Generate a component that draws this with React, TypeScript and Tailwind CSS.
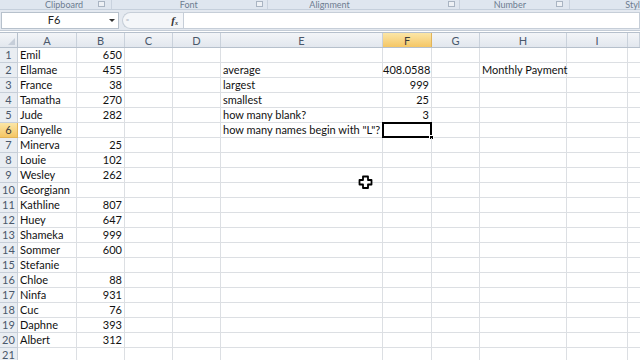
/* Excel 2010 sheet — names & values with summary formulas */

const COLS = ["A", "B", "C", "D", "E", "F", "G", "H", "I", ""];

const NAMES: [string, number | null][] = [
  ["Emil", 650],
  ["Ellamae", 455],
  ["France", 38],
  ["Tamatha", 270],
  ["Jude", 282],
  ["Danyelle", null],
  ["Minerva", 25],
  ["Louie", 102],
  ["Wesley", 262],
  ["Georgiann", null],
  ["Kathline", 807],
  ["Huey", 647],
  ["Shameka", 999],
  ["Sommer", 600],
  ["Stefanie", null],
  ["Chloe", 88],
  ["Ninfa", 931],
  ["Cuc", 76],
  ["Daphne", 393],
  ["Albert", 312],
  ["", null],
];

const SUMMARY: Record<number, [string, string]> = {
  2: ["average", "408.0588"],
  3: ["largest", "999"],
  4: ["smallest", "25"],
  5: ["how many blank?", "3"],
  6: ['how many names begin with "L"?', ""],
};

const GRID = "grid grid-cols-[18px_59px_48px_48px_48px_162px_49px_48px_87px_61px_1fr]";
const FONT = { fontFamily: 'Lato, "Liberation Sans", Arial, sans-serif' };

function Launcher() {
  return (
    <span className="inline-block mt-[1px] w-[7px] h-[6px] border border-[#a9b4c2] bg-[#eef1f5]" />
  );
}

function Cursor() {
  return (
    <svg width="16" height="16" viewBox="0 0 16 16" className="absolute left-[358px] top-[175px]">
      <path d="M6.5 3.5h4v3h3v4h-3v3h-4v-3h-3v-4h3z" fill="#888" opacity="0.35" />
      <path
        d="M5 1.5h5v3.5h3.5v4.5h-3.5v3.5h-5v-3.5h-3.5v-4.5h3.5z"
        fill="#fff"
        stroke="#000"
        strokeWidth="1.8"
        strokeLinejoin="round"
      />
    </svg>
  );
}

export default function App() {
  return (
    <div className="relative w-[640px] h-[360px] overflow-hidden bg-white text-[11px]" style={FONT}>
      {/* Ribbon group labels */}
      <div className="flex h-[10px] bg-[#dfe6ef] text-[#6d7c90] text-[9px] leading-[9px] border-b border-[#c5cfdb]">
        <div className="w-[112px] flex items-start justify-between pl-[45px] pr-[6px] border-r border-[#c9d2de]">
          <span>Clipboard</span>
          <Launcher />
        </div>
        <div className="w-[157px] flex items-start justify-between pl-[68px] pr-[4px] border-r border-[#c9d2de]">
          <span>Font</span>
          <Launcher />
        </div>
        <div className="w-[192px] flex items-start justify-between pl-[41px] pr-[4px] border-r border-[#c9d2de]">
          <span>Alignment</span>
          <Launcher />
        </div>
        <div className="w-[111px] flex items-start justify-between pl-[34px] pr-[6px] border-r border-[#c9d2de]">
          <span>Number</span>
          <Launcher />
        </div>
        <div className="flex-1 pl-[55px] whitespace-nowrap">
          <span>Styl</span>
        </div>
      </div>

      {/* Formula bar */}
      <div className="flex items-center h-[21px] bg-[#e4e9f0] border-b border-[#c4ccd6]">
        <div className="relative w-[118px] h-[17px] ml-[1px] bg-white border border-[#b7c1cc] flex items-center">
          <span className="flex-1 text-center pr-[12px] text-[#222]">F6</span>
          <span className="absolute right-[3px] top-[6px] w-0 h-0 border-l-[3px] border-r-[3px] border-t-[3px] border-l-transparent border-r-transparent border-t-[#333]" />
        </div>
        <div className="ml-[3px] w-[10px] h-[17px] rounded-l-full border border-r-0 border-[#c6ced8] bg-[#f4f6f9] flex items-center justify-center">
          <span className="text-[6px] text-[#aab3bf] leading-none">=</span>
        </div>
        <div className="w-[51px] h-[17px] bg-[#f4f6f9] border-y border-[#c6ced8] flex items-center justify-end pr-[5px]">
          <span className="italic font-bold text-[11px] text-[#333]" style={{ fontFamily: '"Liberation Serif", serif' }}>
            f<sub className="text-[6px]">x</sub>
          </span>
        </div>
        <div className="flex-1 h-[17px] bg-white border border-[#c6ced8]" />
      </div>

      {/* Column headers */}
      <div className={`${GRID} h-[16px] mt-[1px] bg-gradient-to-b from-[#f3f5f8] to-[#e2e7ee] text-[#4a586b] border-y border-[#b6c0cc]`}>
        <div className="relative border-r border-[#b6c0cc]">
          <span className="absolute right-[2px] bottom-[2px] w-0 h-0 border-l-[7px] border-b-[7px] border-l-transparent border-b-[#c6ced9]" />
        </div>
        {COLS.map((c, i) => (
          <div
            key={i}
            className={
              c === "F"
                ? "border-r border-[#e1b45a] bg-gradient-to-b from-[#fbe6a6] to-[#f4c664] text-[#3c3c3c] flex items-center justify-center leading-none"
                : "border-r border-[#c9d1db] flex items-center justify-center leading-none"
            }
          >
            {c}
          </div>
        ))}
      </div>

      {/* Rows */}
      {NAMES.map(([name, val], idx) => {
        const r = idx + 1;
        const s = SUMMARY[r];
        const sel = r === 6;
        return (
          <div key={r} className={`${GRID} h-[15px] leading-[14px] text-[#111]`}>
            <div
              className={
                sel
                  ? "border-r border-b border-[#e1b45a] bg-gradient-to-b from-[#fbe6a6] to-[#f4c664] text-[#3c3c3c] text-center"
                  : "border-r border-b border-[#c7cfd9] bg-[#e9edf2] text-[#4a586b] text-center"
              }
            >
              {r}
            </div>
            <div className="border-r border-b border-[#dcdfe3] pl-[2px] whitespace-nowrap">{name}</div>
            <div className="border-r border-b border-[#dcdfe3] text-right pr-[2px]">{val ?? ""}</div>
            <div className="border-r border-b border-[#dcdfe3]" />
            <div className="border-r border-b border-[#dcdfe3]" />
            <div className="border-r border-b border-[#dcdfe3] pl-[2px] whitespace-nowrap">{s ? s[0] : ""}</div>
            <div className="relative border-r border-b border-[#dcdfe3] text-right pr-[2px]">
              {s ? s[1] : ""}
              {sel && (
                <>
                  <span className="absolute -left-[1px] -top-[1px] w-[50px] h-[16px] border-2 border-black" />
                  <span className="absolute -right-[3px] -bottom-[3px] w-[5px] h-[5px] bg-black border border-white" />
                </>
              )}
            </div>
            <div className="border-r border-b border-[#dcdfe3]" />
            <div className="border-r border-b border-[#dcdfe3] pl-[2px] whitespace-nowrap">
              {r === 2 ? "Monthly Payment" : ""}
            </div>
            <div className="border-r border-b border-[#dcdfe3]" />
            <div className="border-b border-[#dcdfe3]" />
          </div>
        );
      })}

      <Cursor />
    </div>
  );
}
